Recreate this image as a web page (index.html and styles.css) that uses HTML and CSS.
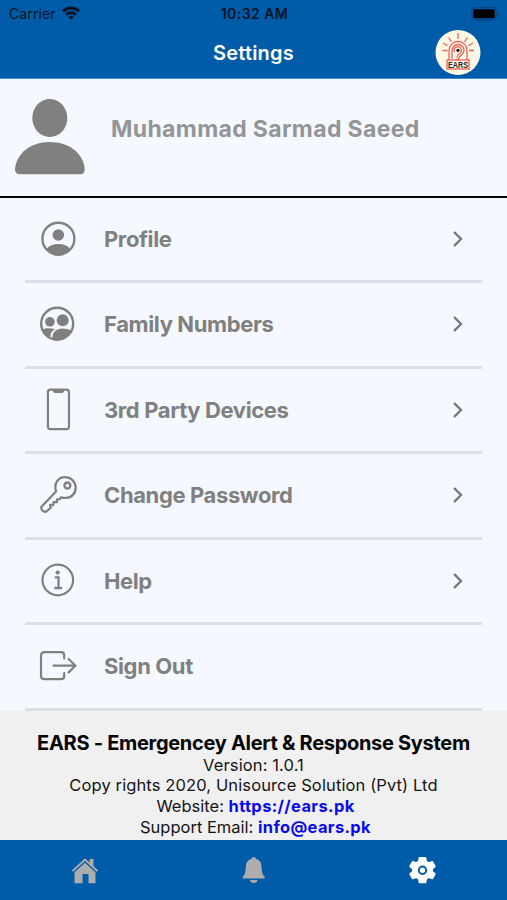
FILE: index.html
```html
<!DOCTYPE html>
<html lang="en">
<head>
<meta charset="utf-8">
<title>Settings</title>
<link rel="stylesheet" href="styles.css">
</head>
<body>
<div class="app">
  <header class="header">
    <div class="status">
      <div class="carrier"><span>Carrier</span>
        <svg width="18" height="14" viewBox="0 0 18 14" fill="none" stroke="#061425" stroke-width="2.9"><path d="M1 5.200C5.500.9 12.500.9 17 5.200M4 8.700C6.800 6.100 11.200 6.100 14 8.700"/><path d="M9 13.700L6.200 10.900Q9 8.700 11.800 10.900Z" fill="#061425" stroke="none"/></svg>
      </div>
      <div class="clock">10:32 AM</div>
      <svg class="battery" width="29" height="14" viewBox="0 0 29 14"><rect x=".7" y=".7" width="24.600" height="12.300" rx="3.500" fill="none" stroke="#083f75"/><rect x="2.200" y="2.300" width="21.600" height="9" rx="1.800" fill="#000"/><path d="M26.500 4.800Q29 6.800 26.500 8.800Z" fill="#083f75"/></svg>
    </div>
    <div class="titlebar">
      <h1>Settings</h1>
      <svg class="logo" width="46" height="46" viewBox="0 0 46 46">
        <circle cx="23" cy="22.500" r="22.500" fill="#fff9e5"/>
        <g fill="none" stroke="#e8625a" stroke-width="1.300">
          <path d="M23 3v6M13.500 7.500l3 4.500M32.500 7.500l-3 4.500M8 13l4.500 2.700M38 13l-4.500 2.700M7.500 20.500h5M34 20.500h5"/>
          <path d="M14 30V20.500a9 9 0 0 1 18 0V30"/>
          <path d="M17 29v-8.500a6 6 0 0 1 12 0c0 4-4 4-5 7.500-.5 1.500-2 2-3 1"/>
          <path d="M19.500 22a3.600 3.600 0 1 1 5 1.500c-2 1-2 2-2.500 4"/>
          <rect x="12" y="30" width="22" height="9"/>
        </g>
        <circle cx="23" cy="20.300" r="1.600" fill="#111"/>
        <text class="logo-text" x="23" y="37.800" text-anchor="middle" textLength="20" lengthAdjust="spacingAndGlyphs">EARS</text>
      </svg>
    </div>
  </header>

  <section class="user">
    <svg width="70" height="76" viewBox="0 0 70 76" fill="#808080"><ellipse cx="34.800" cy="19" rx="17.500" ry="19"/><path d="M5 75.300C1.500 75.300 0 73 0 70C1.500 54 16 43 34.800 43S68.500 54 69.700 70C69.700 73 68.500 75.300 65 75.300Z"/></svg>
    <h2 class="username">Muhammad Sarmad Saeed</h2>
  </section>

  <nav class="menu">
    <a class="row">
      <svg class="icon" viewBox="0 0 44 44"><circle cx="22.400" cy="21.700" r="16" fill="none" stroke="#808080" stroke-width="2.400"/><circle cx="22.300" cy="18" r="5.800"/><path d="M10.500 32C13 28.500 17 26.900 22.300 26.900S31.800 28.500 34.200 32C31 36.500 27 38.300 22.300 38.300S13.500 36.500 10.500 32Z"/></svg>
      <span class="label">Profile</span><svg class="chev" viewBox="0 0 10 16"><path d="M1.700 1.700L8 8L1.700 14.300"/></svg>
    </a>
    <a class="row">
      <svg class="icon" viewBox="0 0 44 44"><circle cx="21.200" cy="21.700" r="16" fill="none" stroke="#808080" stroke-width="2.400"/><circle cx="13.900" cy="19.800" r="4.800"/><circle cx="26.700" cy="18.300" r="6"/><path d="M6.500 27.500C9.500 26 15 26 19.200 27.200C15.500 29 14.300 31.500 14.500 35.500C10.500 33.800 8 31 6.500 27.500Z"/><path d="M16.300 36.500C16 30.500 20 26.600 26.700 26.600C31 26.600 33.500 27.500 35.800 29.200C32.500 36.500 24 39.800 16.300 36.500Z"/></svg>
      <span class="label">Family Numbers</span><svg class="chev" viewBox="0 0 10 16"><path d="M1.700 1.700L8 8L1.700 14.300"/></svg>
    </a>
    <a class="row">
      <svg class="icon" viewBox="0 0 44 44"><rect x="11.900" y="1.700" width="21.100" height="39.500" rx="2.600" fill="none" stroke="#808080" stroke-width="2.200"/><path d="M16.500 1.500h12c-.8 1.200-.5 3.500-2.500 3.500h-7c-2 0-1.700-2.300-2.500-3.500Z"/></svg>
      <span class="label">3rd Party Devices</span><svg class="chev" viewBox="0 0 10 16"><path d="M1.700 1.700L8 8L1.700 14.300"/></svg>
    </a>
    <a class="row">
      <svg class="icon" viewBox="0 0 44 44"><g fill="none" stroke="#808080" stroke-width="2.300" stroke-linejoin="round"><path d="M20 18.500C17.500 10 22.500 4.200 29 4.200C35 4.200 39.700 8.800 39.700 14.500C39.700 20.500 35.500 24.700 30 24.900C28 25 26.500 24.700 25.300 24.300L23.700 26.200L21.100 26.300L20.900 29.200L17.700 29.100L17.200 32L14.200 31.900L14.600 34.800L11 38Q9 39.400 7 38.100Q4.800 36 5.500 33.700Z"/><circle cx="31.400" cy="12.500" r="3"/></g></svg>
      <span class="label">Change Password</span><svg class="chev" viewBox="0 0 10 16"><path d="M1.700 1.700L8 8L1.700 14.300"/></svg>
    </a>
    <a class="row">
      <svg class="icon" viewBox="0 0 44 44"><circle cx="21.800" cy="21" r="15.300" fill="none" stroke="#808080" stroke-width="2.200"/><circle cx="21.700" cy="13.600" r="2.100"/><path d="M18.800 18.400H22.500V29M18.300 29H26" fill="none" stroke="#808080" stroke-width="2.300"/></svg>
      <span class="label">Help</span><svg class="chev" viewBox="0 0 10 16"><path d="M1.700 1.700L8 8L1.700 14.300"/></svg>
    </a>
    <a class="row">
      <svg class="icon" viewBox="0 0 44 44"><g fill="none" stroke="#808080" stroke-width="2.200" stroke-linecap="round" stroke-linejoin="round"><path d="M28.200 14.500V11.500Q28.200 8.200 25 8.200H8.700Q5 8.200 5 11.800V31.600Q5 35.200 8.700 35.200H25Q28.200 35.200 28.200 32V29M17.500 21.700H39.500M32.600 15L39.500 21.700L32.600 28.400"/></g></svg>
      <span class="label">Sign Out</span>
    </a>
  </nav>

  <footer class="about">
    <strong class="about-title">EARS - Emergencey Alert &amp; Response System</strong>
    <p>Version: 1.0.1</p>
    <p>Copy rights 2020, Unisource Solution (Pvt) Ltd</p>
    <p class="contact">Website: <b>https://ears.pk</b></p>
    <p class="contact">Support Email: <b>info@ears.pk</b></p>
  </footer>

  <nav class="tabs">
    <a class="tab"><svg width="28" height="28" viewBox="0 0 28 28" fill="#adadad"><path d="M.8 14.500L14 2.200L18.700 6.500V3H22.500V10L27.200 14.500L25.800 15.800L14 5L2.200 15.800Z"/><path d="M14 6.800L24.500 16.300V27.300H17.500V18H11.500V27.300H3.500V16.300Z"/></svg></a>
    <a class="tab"><svg width="28" height="28" viewBox="0 0 28 28" fill="#adadad"><path d="M13.700 1.200C15.200 1.200 15.900 1.900 16.200 2.900C19.800 4 21.500 6.500 21.600 10.500C21.800 16 22.300 18.500 24.700 20.700V22.600H2.700V20.700C5.100 18.500 5.600 16 5.800 10.500C5.900 6.500 7.600 4 11.200 2.900C11.500 1.900 12.200 1.200 13.700 1.200ZM10 23.900H17.400C17.200 25.800 15.700 26.900 13.700 26.900S10.200 25.800 10 23.900Z"/></svg></a>
    <a class="tab"><svg width="28" height="28" viewBox="0.500 0 28 28"><path fill="#fff" stroke="#fff" stroke-width="1.600" stroke-linejoin="round" d="M11 1.800H17L17.700 5.500L20.200 7L23.800 5.700L26.400 10.500L23.600 13V15.500L26.400 17.800L23.800 22.500L20.200 21.300L17.700 22.800L17 26.500H11L10.300 22.800L7.800 21.300L4.200 22.500L1.600 17.800L4.400 15.500V13L1.600 10.500L4.200 5.700L7.800 7L10.300 5.500Z"/><circle cx="14" cy="14.200" r="3.700" fill="none" stroke="#005ba8" stroke-width="2"/></svg></a>
  </nav>
</div>
</body>
</html>
```

FILE: styles.css
```css
* { box-sizing: border-box; }
body { margin: 0; font-family: Inter, sans-serif; }
h1, h2, p { margin: 0; }
svg { display: block; flex: none; }

.app { width: 507px; height: 900px; display: flex; flex-direction: column; background: #f5f9ff; overflow: hidden; }

.header { height: 79px; flex: none; background: #005ba8; border-bottom: 1px solid #3f8fcf; }
.status { height: 27px; display: grid; grid-template-columns: 1fr auto 1fr; align-items: center; padding: 0 7px 0 9px; color: #061425; font-size: 14px; }
.carrier { display: flex; align-items: center; gap: 6px; letter-spacing: 0.1px; }
.carrier svg { margin-top: -1px; }
.clock { font-weight: 600; font-size: 14px; letter-spacing: 0.450px; }
.battery { justify-self: end; }
.titlebar { height: 52px; display: grid; grid-template-columns: 1fr auto 1fr; align-items: center; padding: 0 26px; }
.titlebar h1 { grid-column: 2; color: #fff; font-size: 20px; font-weight: 600; line-height: 50px; letter-spacing: 0.200px; }
.logo { justify-self: end; }
.logo-text { font: 700 9.500px "Liberation Sans", sans-serif; fill: #222; }

.user { height: 118.500px; flex: none; display: flex; align-items: flex-start; gap: 26px; padding: 20px 15px 0; border-bottom: 2px solid #08090b; }
.username { font-size: 23px; font-weight: 700; line-height: 28px; margin-top: 15.500px; color: #939597; letter-spacing: 0.350px; white-space: nowrap; }

.menu { flex: none; padding: 0 25px; }
.row { height: 85.500px; display: flex; align-items: center; padding: 0 19px 0 11px; border-bottom: 3px solid #dcdfe3; }
.icon { width: 44px; height: 44px; fill: #808080; }
.label { flex: 1; margin-left: 24px; font-size: 22px; font-weight: 650; color: #808080; letter-spacing: -0.380px; white-space: nowrap; }
.chev { width: 10px; height: 16px; fill: none; stroke: #777b7e; stroke-width: 2.400; stroke-linecap: round; }

.about { flex: 1; background: #f0f0f0; padding-top: 21.500px; text-align: center; color: #151515; font-size: 16.500px; line-height: 20.800px; letter-spacing: 0.120px; white-space: nowrap; }
.about-title { display: block; font-size: 20px; font-weight: 650; line-height: 22.500px; letter-spacing: -0.300px; color: #050505; }
.contact { padding-left: 4px; letter-spacing: 0; }
.about b { color: #0a0aee; font-weight: 700; letter-spacing: 0.350px; }

.tabs { height: 60px; flex: none; display: grid; grid-template-columns: repeat(3, 1fr); background: #005ba8; }
.tab { display: flex; align-items: center; justify-content: center; }
```
